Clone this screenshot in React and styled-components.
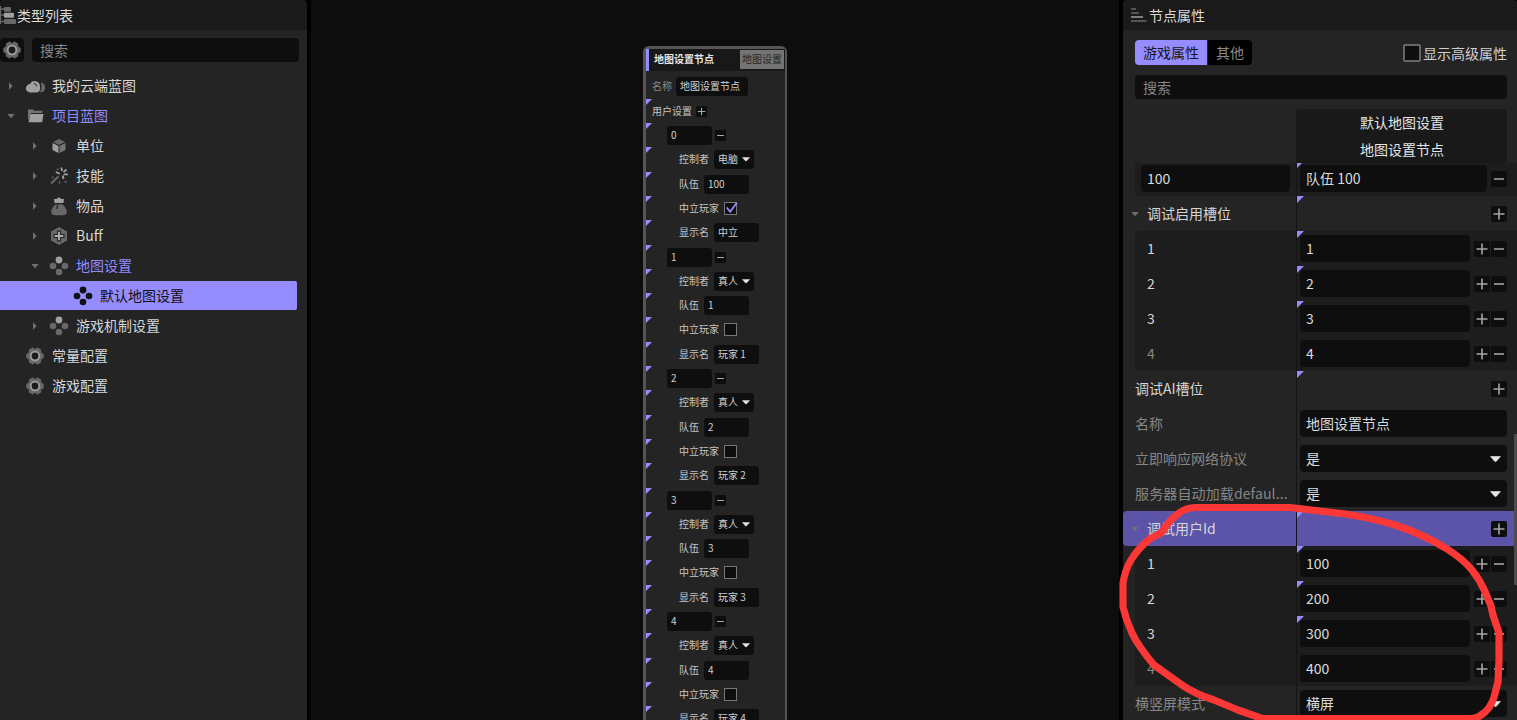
import React from "react";
import styled, { createGlobalStyle, css } from "styled-components";

const Global = createGlobalStyle`
  * { box-sizing: border-box; }
  html, body { margin: 0; background: #000; overflow: hidden; }
  body { font-family: "Noto Sans CJK SC", "Noto Sans", sans-serif; font-size: 14px; color: #d6d6d6; }
`;

const Shell = styled.div`
  position: relative;
  display: flex;
  gap: 4px;
  width: 1517px;
  height: 720px;
  overflow: hidden;
  background: #000;
`;

/* ---------- shared ---------- */
/* Small purple badge over the top-left corner of a slot. */
const cornerMark = (size) => css`
  position: relative;
  &::before {
    content: "";
    position: absolute;
    left: 0;
    top: 0;
    width: ${size}px;
    height: ${size}px;
    background: #948cff;
    clip-path: polygon(0 0, 100% 0, 0 100%);
  }
`;
const Panel = styled.section`
  display: flex;
  flex-direction: column;
  flex: none;
  width: ${(p) => p.$width}px;
  background: #242424;
  border-radius: 4px 4px 0 0;
  overflow: hidden;
`;
const PanelHeader = styled.header`
  display: flex;
  align-items: center;
  gap: ${(p) => p.$gap || 0}px;
  flex: none;
  height: 30px;
  padding-left: ${(p) => p.$indent || 0}px;
  background: #1a1a1a;
  line-height: 30px;
  color: #dcdcdc;
  svg { flex: none; }
`;
const SearchBox = styled.div`
  flex: 1;
  height: 24px;
  padding: 0 8px;
  border-radius: 4px;
  background: #0e0e0e;
  color: #868686;
  line-height: 25px;
`;
const Label = styled.span`
  margin: 0 0 2px ${(p) => p.$indent || 0}px;
  letter-spacing: ${(p) => p.$spacing || 0}px;
`;

/* ---------- type tree ---------- */
const SearchRow = styled.div`
  display: flex;
  gap: 8px;
  padding: 8px 8px 9px 0;
`;
const GearButton = styled.div`
  display: flex;
  align-items: center;
  width: 24px;
  height: 24px;
  padding-left: 1.500px;
  border-radius: 4px;
  background: #0e0e0e;
`;
const TreeRow = styled.div`
  display: flex;
  align-items: center;
  height: ${(p) => (p.$selected ? 29 : 30)}px;
  margin-bottom: ${(p) => (p.$selected ? 1 : 0)}px;
  width: 297px;
  padding-left: ${(p) => 5 + p.$level * 24}px;
  border-radius: 0 2px 2px 0;
  background: ${(p) => (p.$selected ? "#948cff" : "transparent")};
  color: ${(p) => (p.$selected ? "#111" : p.$active ? "#948cff" : "#d6d6d6")};
`;
const ArrowSlot = styled.span`
  display: flex;
  justify-content: center;
  width: 12px;
`;
const IconSlot = styled.span`
  display: flex;
  justify-content: center;
  width: 20px;
  margin: 0 7px 0 8px;
`;

const A = "#a0a0a0";
const B = "#686868";

const Caret = ({ open }) => (
  <svg width="12" height="12" viewBox="0 0 12 12">
    <path d={open ? "M2.300 4h7.400L6 8.200z" : "M4 2.200v7.600L7.700 6z"} fill="#707070" />
  </svg>
);

const gearOutline = [0, 60, 120, 180, 240, 300]
  .flatMap((a) => [[a - 27, 6.9], [a - 13, 8.6], [a + 13, 8.6], [a + 27, 6.9]])
  .map(([a, r]) => {
    const t = (a * Math.PI) / 180;
    return `${(10 + r * Math.cos(t)).toFixed(2)},${(10 + r * Math.sin(t)).toFixed(2)}`;
  })
  .join(" ");

const Gear = () => (
  <svg width="20" height="20" viewBox="0 0 20 20">
    <polygon points={gearOutline} fill={B} stroke={B} strokeWidth=".6" strokeLinejoin="round" />
    <circle cx="10" cy="10" r="4.300" fill="#1c1c1c" stroke="#a0a0a0" strokeWidth="1.800" />
  </svg>
);
const Cloud = () => (
  <svg width="20" height="20" viewBox="0 0 20 20">
    <path d="M15.800 6.500A4.800 4.800 0 0 1 15 16.300Q17.300 11.500 15.800 6.500Z" fill={B} />
    <path d="M5.200 16.500A4.200 4.200 0 0 1 5 8.100A5.200 5.200 0 0 1 14.900 9.800Q16 16.500 11.500 16.500Z" fill={A} />
    <path d="M8.800 7.500q2.700.2 3 2.800" fill="none" stroke="#242424" strokeWidth="1" />
  </svg>
);
const Folder = () => (
  <svg width="20" height="20" viewBox="0 0 20 20">
    <path d="M3 3.500h5l1.200 1.300h8.100v2.200H6L3.800 13.500H3z" fill="#747474" />
    <path d="M5.500 8h13l-1.300 8.300H3.500z" fill={A} />
  </svg>
);
const Cube = () => (
  <svg width="20" height="20" viewBox="0 0 20 20">
    <path d="M10 3l6 3-6 3.100L4 6z" fill={B} />
    <path d="M3.500 7L9.500 10.100v7L3.500 14z" fill={A} />
    <path d="M16.500 7l-6 3.100v7l6-3.100z" fill="#747474" />
  </svg>
);
const Wand = () => (
  <svg width="20" height="20" viewBox="0 0 20 20" fill="none">
    <path d="M2 17.500l7.500-7" stroke={B} strokeWidth="2" />
    <path d="M12.300 1.500l.7 3.500M17.500 3.500l-3 2.700M19 8.300h-4.300M13.800 9.500l.7 3.500M6.800 6l4 1.800" stroke={A} strokeWidth="1.800" />
    <path d="M2.700 11.500h2M10.500 15.500v2M15.800 15.200l1.500 1.500M8.300 2.500l.8 1.200" stroke={B} strokeWidth="1.700" />
  </svg>
);
const Bag = () => (
  <svg width="20" height="20" viewBox="0 0 20 20">
    <path d="M5 3h2.500L10 1.300 12.500 3H15L14.500 7h-9z" fill={A} />
    <path d="M6.500 8.300h7c2.300 2.300 4.300 5.300 4.300 7.700 0 2.200-1.800 3.300-4 3.300H6.200c-2.200 0-4-1.100-4-3.300 0-2.400 2-5.400 4.300-7.700z" fill={B} />
    <path d="M8.500 8c.5 2-.8 2.500-.8 5" fill="none" stroke="#242424" strokeWidth="1.200" />
  </svg>
);
const Hex = () => (
  <svg width="20" height="20" viewBox="0 0 20 20">
    <path d="M10 1l8 4.500v9L10 19l-8-4.500v-9z" fill={B} />
    <path d="M10 4.500v11M4.500 10h11" stroke="#242424" strokeWidth="4" />
    <path d="M10 5.700v8.600M5.700 10h8.600" stroke="#b0b0b0" strokeWidth="1.900" />
  </svg>
);
const Dots = ({ dark }) => (
  <svg width="20" height="20" viewBox="0 0 20 20" fill={dark ? "#111" : B}>
    <circle cx="10" cy="4" r="3.400" fill={dark ? "#111" : A} />
    <circle cx="4" cy="10" r="3.300" />
    <circle cx="16" cy="10" r="3.300" />
    <circle cx="10" cy="16" r="3.300" />
  </svg>
);
const ListLogo = () => (
  <svg width="17" height="20" viewBox="0 0 17 20">
    <path d="M.5 1v18M0 4h4M0 16.500h4M0 10h4" fill="none" stroke={B} strokeWidth="1.300" />
    <rect x="4" y="2" width="7" height="4.800" rx="1" fill={B} />
    <rect x="4" y="7.700" width="10" height="5.100" rx="1" fill={A} />
    <rect x="4" y="14" width="12" height="5" rx="1" fill={B} />
  </svg>
);
const BarsLogo = () => (
  <svg width="16" height="16" viewBox="0 0 16 16">
    <path d="M0 2h5M0 14h15.500" stroke={B} strokeWidth="1.600" />
    <path d="M0 6h8" stroke={B} strokeWidth="1.600" />
    <path d="M0 10h12" stroke={A} strokeWidth="1.600" />
  </svg>
);

const TREE = [
  { label: "我的云端蓝图", level: 0, arrow: "closed", icon: <Cloud /> },
  { label: "项目蓝图", level: 0, arrow: "open", icon: <Folder />, active: true },
  { label: "单位", level: 1, arrow: "closed", icon: <Cube /> },
  { label: "技能", level: 1, arrow: "closed", icon: <Wand /> },
  { label: "物品", level: 1, arrow: "closed", icon: <Bag /> },
  { label: "Buff", level: 1, arrow: "closed", icon: <Hex /> },
  { label: "地图设置", level: 1, arrow: "open", icon: <Dots />, active: true },
  { label: "默认地图设置", level: 2, icon: <Dots dark />, selected: true },
  { label: "游戏机制设置", level: 1, arrow: "closed", icon: <Dots /> },
  { label: "常量配置", level: 0, icon: <Gear /> },
  { label: "游戏配置", level: 0, icon: <Gear /> },
];

/* ---------- canvas node ---------- */
const Canvas = styled.main`
  position: relative;
  flex: 1;
  background: #0d0d0d;
  overflow: hidden;
`;
const Node = styled.div`
  position: absolute;
  left: 332px;
  top: 46px;
  width: 144px;
  height: 700px;
  border: 3px solid #555;
  border-right-width: 2px;
  border-radius: 6px;
  background: #242424;
  font-size: 10px;
  color: #c4c4c4;
`;
const NodeHeader = styled.div`
  display: flex;
  justify-content: space-between;
  height: 22px;
  padding: 1px 1px 0 5px;
  border-left: 3px solid #948cff;
  background: #181818;
  color: #e6e6e6;
  font-weight: 700;
  line-height: 18px;
`;
const NodeTag = styled.span`
  width: 44px;
  height: 19px;
  background: #747474;
  color: #262626;
  font-weight: 400;
  text-align: center;
`;
const NodeName = styled.div`
  display: flex;
  gap: 4px;
  height: 28px;
  padding: 6px 0 0 6px;
  color: #8a8a8a;
  line-height: 18px;
`;
const NodeRow = styled.div`
  ${cornerMark(6)}
  display: flex;
  align-items: flex-start;
  gap: ${(p) => p.$gap ?? 5}px;
  height: ${(p) => p.$height}px;
  padding: 3px 0 0 ${(p) => p.$indent}px;
  line-height: 18px;
`;
const NodeField = styled.span`
  display: flex;
  justify-content: space-between;
  width: ${(p) => p.$width}px;
  height: 19px;
  padding: 0 4px;
  border-radius: 3px;
  background: #0e0e0e;
  color: #d0d0d0;
  line-height: 18px;
  svg { align-self: center; }
`;
const MiniButton = styled.span`
  display: flex;
  align-items: center;
  justify-content: center;
  width: 11px;
  height: 11px;
  margin: 4px 0 0 ${(p) => p.$shift || 0}px;
  background: #0e0e0e;
`;
const MiniCheck = styled.span`
  display: flex;
  width: 13px;
  height: 13px;
  margin-top: 3px;
  border: 1px solid #777;
  background: #0e0e0e;
  svg { flex: none; margin: -2px 0 0 -1px; }
`;
const Sign = ({ size, plus, weight, color }) => (
  <svg width={size} height={size} viewBox="0 0 16 16" stroke={color} strokeWidth={weight}>
    <path d={plus ? "M2.500 8h11M8 2.500v11" : "M3 8h10"} />
  </svg>
);
const Drop = ({ width }) => (
  <svg width={width} height={width * 0.55} viewBox="0 0 10 5.500">
    <path d="M.5.500h9L5.800 4.700Q5 5.400 4.200 4.700z" fill="#e6e6e6" stroke="#e6e6e6" strokeWidth=".6" strokeLinejoin="round" />
  </svg>
);

const PLAYERS = [
  { id: 0, kind: "电脑", team: "100", neutral: true, name: "中立" },
  { id: 1, kind: "真人", team: "1", name: "玩家 1" },
  { id: 2, kind: "真人", team: "2", name: "玩家 2" },
  { id: 3, kind: "真人", team: "3", name: "玩家 3" },
  { id: 4, kind: "真人", team: "4", name: "玩家 4" },
];

/* Rows are 24.3px apart on the zoomed canvas, snapped to whole pixels. */
const rowTop = (i) => Math.floor(0.2 + 24.3 * i);
const rowHeight = (i) => rowTop(i + 1) - rowTop(i);

const PlayerRows = ({ p, first }) => (
  <>
    <NodeRow $indent={21} $height={rowHeight(first)}>
      <NodeField $width={45}>{p.id}</NodeField>
      <MiniButton $shift={-2}><Sign size={11} weight={1.5} color="#aaa" /></MiniButton>
    </NodeRow>
    <NodeRow $indent={33} $height={rowHeight(first + 1)}>
      控制者
      <NodeField $width={40}>{p.kind}<Drop width={8} /></NodeField>
    </NodeRow>
    <NodeRow $indent={33} $height={rowHeight(first + 2)}>
      队伍
      <NodeField $width={45}>{p.team}</NodeField>
    </NodeRow>
    <NodeRow $indent={33} $height={rowHeight(first + 3)}>
      中立玩家
      <MiniCheck>
        {p.neutral && (
          <svg width="14" height="14" viewBox="0 0 14 14">
            <path d="M2.700 6.500l3.500 4.200L12.800 1.700" fill="none" stroke="#948cff" strokeWidth="1.800" />
          </svg>
        )}
      </MiniCheck>
    </NodeRow>
    <NodeRow $indent={33} $height={rowHeight(first + 4)}>
      显示名
      <NodeField $width={45}>{p.name}</NodeField>
    </NodeRow>
  </>
);

/* ---------- properties ---------- */
const TabsRow = styled.div`
  display: flex;
  align-items: flex-start;
  justify-content: space-between;
  flex: none;
  height: 35px;
  padding: 10px 10px 0 12px;
`;
const Tabs = styled.div`
  display: flex;
  gap: 1px;
  border-radius: 4px;
  overflow: hidden;
`;
const Tab = styled.span`
  height: 25px;
  padding: 0 8px;
  background: ${(p) => (p.$active ? "#948cff" : "#000")};
  color: ${(p) => (p.$active ? "#161616" : "#8a8a8a")};
  line-height: 25px;
`;
const Advanced = styled.label`
  display: flex;
  align-items: center;
  gap: 2px;
  color: #d0d0d0;
  line-height: 27px;
`;
const Check = styled.span`
  width: 18px;
  height: 18px;
  margin-bottom: 1px;
  border: 2px solid #666;
  border-radius: 2px;
  background: #0e0e0e;
`;
const PropSearch = styled.div`
  display: flex;
  padding: 10px 10px 10px 12px;
`;
const Owners = styled.div`
  display: flex;
  flex-direction: column;
  flex: none;
  height: 54px;
  margin: 0 10px 0 173px;
  padding-left: 1px;
  border-radius: 4px 4px 0 0;
  background: #191919;
  color: #e4e4e4;
  text-align: center;
`;
const Owner = styled.div`
  height: 27px;
  line-height: 27px;
`;
const Viewport = styled.div`
  display: flex;
  flex-direction: column;
  justify-content: flex-end;
  flex: none;
  height: 558px;
  overflow: hidden;
`;
const Group = styled.div`
  flex: none;
  margin-left: 12px;
  border-radius: 4px 0 0 4px;
  background: #1d1d1d;
`;
const PropRow = styled.div`
  display: flex;
  flex: none;
  height: 35px;
  border-radius: 4px 0 0 4px;
  background: ${(p) => (p.$selected ? "#5b54a8" : "transparent")};
`;
const Key = styled.div`
  display: flex;
  align-items: center;
  flex: none;
  width: ${(p) => (p.$nested ? 162 : 174)}px;
  padding-left: ${(p) => (p.$arrow ? 6 : p.$pad ?? 12)}px;
  border-right: 1px solid #141414;
  color: ${(p) => (p.$muted ? "#868686" : "#d6d6d6")};
  white-space: nowrap;
`;
const Value = styled.div`
  display: flex;
  align-items: center;
  justify-content: flex-end;
  flex: 1;
  padding: 0 10px 0 3px;
  ${(p) => p.$mark && cornerMark(7)}
`;
const Field = styled.div`
  display: flex;
  align-items: center;
  justify-content: space-between;
  flex: ${(p) => (p.$width ? "none" : 1)};
  width: ${(p) => (p.$width ? p.$width + "px" : "auto")};
  height: 27px;
  padding: 0 6px;
  border-radius: 4px;
  background: #0e0e0e;
  color: #dcdcdc;
  z-index: 1;
  svg { margin-top: 2px; }
`;
const Buttons = styled.div`
  display: flex;
  gap: 1px;
  margin-left: 4px;
`;
const Square = styled.span`
  display: flex;
  width: 16px;
  height: 16px;
  border-radius: 2px;
  background: #0e0e0e;
`;
const ScrollThumb = styled.div`
  position: absolute;
  right: 0;
  top: 434px;
  width: 3px;
  height: 151px;
  background: #4c4c4c;
`;
const Annotation = styled.svg`
  position: absolute;
  inset: 0;
  z-index: 2;
  pointer-events: none;
`;

const Plus = () => <Square><Sign size={16} plus weight={1.6} color="#a6a6a6" /></Square>;
const Minus = () => <Square><Sign size={16} weight={1.6} color="#a6a6a6" /></Square>;

const HeadRow = ({ label, arrow, selected }) => (
  <PropRow $selected={selected}>
    <Key $arrow={arrow}>
      {arrow && <ArrowSlot><Caret open /></ArrowSlot>}
      <Label $indent={arrow ? 6 : 0}>{label}</Label>
    </Key>
    <Value $mark><Plus /></Value>
  </PropRow>
);
const ListRows = ({ values }) => (
  <Group>
    {values.map((v, i) => (
      <PropRow key={i}>
        <Key $nested $muted={i === values.length - 1}><Label>{i + 1}</Label></Key>
        <Value $mark={i < values.length - 1}>
          <Field><Label>{v}</Label></Field>
          <Buttons><Plus /><Minus /></Buttons>
        </Value>
      </PropRow>
    ))}
  </Group>
);
const FieldRow = ({ label, value, drop, spacing }) => (
  <PropRow>
    <Key $muted><Label $spacing={spacing}>{label}</Label></Key>
    <Value><Field><Label>{value}</Label>{drop && <Drop width={11} />}</Field></Value>
  </PropRow>
);

export default function App() {
  return (
    <Shell>
      <Global />
      <Panel $width={307}>
        <PanelHeader><ListLogo />类型列表</PanelHeader>
        <SearchRow>
          <GearButton><Gear /></GearButton>
          <SearchBox>搜索</SearchBox>
        </SearchRow>
        {TREE.map((t) => (
          <TreeRow key={t.label} $level={t.level} $active={t.active} $selected={t.selected}>
            <ArrowSlot>{t.arrow && <Caret open={t.arrow === "open"} />}</ArrowSlot>
            <IconSlot>{t.icon}</IconSlot>
            <Label>{t.label}</Label>
          </TreeRow>
        ))}
      </Panel>

      <Canvas>
        <Node>
          <NodeHeader>地图设置节点<NodeTag>地图设置</NodeTag></NodeHeader>
          <NodeName>名称<NodeField $width={72}>地图设置节点</NodeField></NodeName>
          <NodeRow $indent={6} $gap={4} $height={rowHeight(0)}>
            用户设置
            <MiniButton><Sign size={11} plus weight={1.5} color="#aaa" /></MiniButton>
          </NodeRow>
          {PLAYERS.map((p, i) => <PlayerRows key={p.id} p={p} first={1 + i * 5} />)}
        </Node>
      </Canvas>

      <Panel $width={394}>
        <PanelHeader $indent={8} $gap={2}><BarsLogo />节点属性</PanelHeader>
        <TabsRow>
          <Tabs><Tab $active>游戏属性</Tab><Tab>其他</Tab></Tabs>
          <Advanced><Check />显示高级属性</Advanced>
        </TabsRow>
        <PropSearch><SearchBox>搜索</SearchBox></PropSearch>
        <Owners><Owner>默认地图设置</Owner><Owner>地图设置节点</Owner></Owners>
        <Viewport>
          <Group>
            <PropRow>
              <Key $nested $pad={6}><Field $width={149}><Label>100</Label></Field></Key>
              <Value $mark><Field><Label>队伍 100</Label></Field><Buttons><Minus /></Buttons></Value>
            </PropRow>
          </Group>
          <HeadRow label="调试启用槽位" arrow />
          <ListRows values={["1", "2", "3", "4"]} />
          <HeadRow label="调试AI槽位" />
          <FieldRow label="名称" value="地图设置节点" />
          <FieldRow label="立即响应网络协议" value="是" drop />
          <FieldRow label="服务器自动加载defaul..." value="是" drop spacing={0.13} />
          <HeadRow label="调试用户Id" arrow selected />
          <ListRows values={["100", "200", "300", "400"]} />
          <FieldRow label="横竖屏模式" value="横屏" drop />
        </Viewport>
      </Panel>

      <ScrollThumb />
      <Annotation width="1517" height="720" viewBox="0 0 1517 720">
        <path
          d="M1195 507.500H1290L1345 514Q1372 518 1395 525Q1425 535 1447 549Q1463 559 1472 570Q1480 580 1485 591.500L1491 606L1493 615L1499 633V660L1498 682L1494 697Q1490 710 1481 715Q1477 718.500 1470 718.500H1262L1238 710L1214 700Q1195 694 1182 685L1154 665Q1138 646 1132 633Q1126 620 1123 607V583Q1125 570 1131 560Q1139 547 1151 538L1161 533L1170 521Q1182 507.500 1195 507.500Z"
          fill="none"
          stroke="#fb3836"
          strokeWidth="7.200"
          strokeLinejoin="round"
        />
      </Annotation>
    </Shell>
  );
}
